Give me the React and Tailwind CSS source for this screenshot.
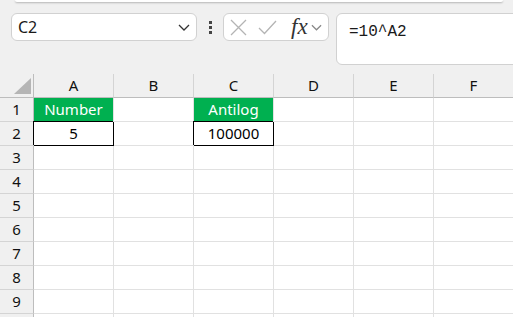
import React from "react";

const cols = ["A", "B", "C", "D", "E", "F"];
const rows = [1, 2, 3, 4, 5, 6, 7, 8, 9, 10];

const cells = {
  A1: { text: "Number", green: true },
  A2: { text: "5", boxed: true },
  C1: { text: "Antilog", green: true },
  C2: { text: "100000", boxed: true },
};

const Chevron = ({ w = 12, color = "#333" }) => (
  <svg width={w} height="7" viewBox="0 0 12 7" fill="none">
    <path d="M1 1 L6 6 L11 1" stroke={color} strokeWidth="1.3" />
  </svg>
);

const Cell = ({ id }) => {
  const cell = cells[id];
  if (!cell) {
    return <div className="h-6 border-r border-b border-[#e1e1e1] bg-white" />;
  }
  if (cell.green) {
    return (
      <div className="h-6 border-r border-b border-[#e1e1e1] bg-[#00b050] text-white flex items-center justify-center">
        {cell.text}
      </div>
    );
  }
  return (
    <div className="relative z-10 h-6 border-r border-b border-black bg-white shadow-[-1px_-1px_0_0_#000] flex items-center justify-center text-black">
      {cell.text}
    </div>
  );
};

const App = () => {
  return (
    <div
      className="w-[513px] h-[317px] overflow-hidden bg-[#f0f0f0]"
      style={{ fontFamily: '"Noto Sans", sans-serif' }}
    >
      {/* ribbon edge */}
      <div className="ml-[15px] mr-[10px] h-[2px] bg-white rounded-b-sm shadow-[0_1px_2px_rgba(0,0,0,0.25)]" />

      {/* formula bar */}
      <div className="flex items-start pl-[11px] mt-[11px]">
        <div className="shrink-0 w-[186px] h-[28px] bg-white border border-[#d1d1d1] rounded-md flex items-center justify-between pl-[6px] pr-[6px]">
          <span className="text-[16px] text-[#1a1a1a] leading-none">C2</span>
          <Chevron />
        </div>
        <div className="shrink-0 w-[26px] h-[28px] flex flex-col items-center justify-center gap-[2px]">
          <div className="w-[3px] h-[3px] bg-[#444]" />
          <div className="w-[3px] h-[3px] bg-[#444]" />
          <div className="w-[3px] h-[3px] bg-[#444]" />
        </div>
        <div className="shrink-0 w-[106px] h-[28px] bg-white border border-[#d1d1d1] rounded-md flex items-center pl-[6px]">
          <svg width="17" height="17" viewBox="0 0 17 17" fill="none">
            <path d="M1 1 L16 16 M16 1 L1 16" stroke="#b4b4b4" strokeWidth="1.3" />
          </svg>
          <svg className="ml-[11px]" width="19" height="15" viewBox="0 0 19 15" fill="none">
            <path d="M1 8 L6.5 13.5 L18 1" stroke="#b4b4b4" strokeWidth="1.3" />
          </svg>
          <span
            className="ml-[14px] text-[23px] italic text-[#333] leading-none -mt-[2px]"
            style={{ fontFamily: '"Liberation Serif", serif' }}
          >
            fx
          </span>
          <span className="ml-[3px]">
            <Chevron w={11} color="#888" />
          </span>
        </div>
        <div className="shrink-0 ml-[7px] w-[200px] h-[52px] bg-white border border-[#d1d1d1] rounded-md pl-[12px] pt-[4px]">
          <span
            className="text-[16px] leading-[22px] text-[#1a1a1a]"
            style={{ fontFamily: '"Liberation Mono", monospace' }}
          >
            =10^A2
          </span>
        </div>
      </div>

      {/* grid */}
      <div className="mt-[9px] grid grid-cols-[34px_repeat(6,80px)] text-[15px] text-[#111]">
        <div className="h-6 border-r border-b border-[#bdbdbd] bg-[#f0f0f0] flex items-end justify-end pr-[2px] pb-[3px]">
          <svg width="17" height="16" viewBox="0 0 17 16">
            <polygon points="17,0 17,16 0,16" fill="#b5b5b5" />
          </svg>
        </div>
        {cols.map((c) => (
          <div
            key={c}
            className="h-6 border-r border-b border-r-[#d4d4d4] border-b-[#bdbdbd] bg-[#f0f0f0] flex items-center justify-center"
          >
            {c}
          </div>
        ))}
        {rows.map((r) => (
          <React.Fragment key={r}>
            <div className="h-6 border-r border-b border-r-[#bdbdbd] border-b-[#d4d4d4] bg-[#f0f0f0] flex items-center justify-center">
              {r < 10 ? r : ""}
            </div>
            {cols.map((c) => (
              <Cell key={c + r} id={c + r} />
            ))}
          </React.Fragment>
        ))}
      </div>
    </div>
  );
};

export default App;
